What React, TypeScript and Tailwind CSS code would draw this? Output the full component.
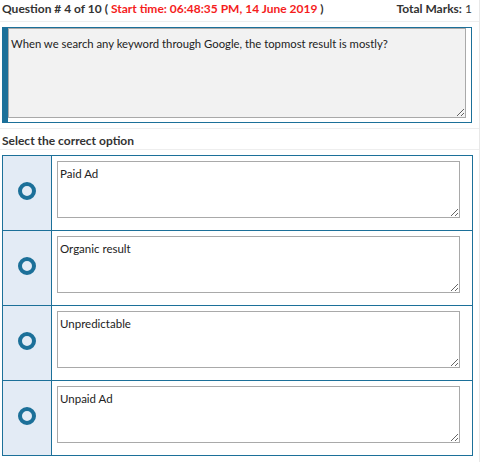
import React from "react";

const options = ["Paid Ad", "Organic result", "Unpredictable", "Unpaid Ad"];

export default function App() {
  return (
    <div className="w-[480px] h-[462px] bg-white border-r border-[#e8e8e8] overflow-hidden font-['Lato',sans-serif] text-[#333]">
      <div className="flex justify-between items-center h-[22px] px-[2px] pr-[7px] pb-[3px] border-b border-[#eeeeee] text-[12px]">
        <div className="font-bold">
          Question # 4 of 10 ({" "}
          <span className="text-[#f51d1d]">Start time: 06:48:35 PM, 14 June 2019</span> )
        </div>
        <div>
          <span className="font-bold">Total Marks:</span> 1
        </div>
      </div>

      <div className="mt-[5px] ml-[2px] w-[470px] border border-l-[6px] border-[#1c7099] pt-0 pb-[4px] pr-[5px]">
        <textarea
          readOnly
          defaultValue="When we search any keyword through Google, the topmost result is mostly?"
          className="block w-[458px] h-[90px] bg-[#f2f2f2] border border-[#a9a9a9] px-[2px] pt-[6px] text-[11.3px] leading-[18px] text-[#222] font-['Lato',sans-serif] outline-none resize-y"
        />
      </div>

      <div className="mt-[5px] border-t border-b border-[#eeeeee] h-[22px] flex items-center pt-[4px] px-[2px] text-[12px] font-bold">
        Select the correct option
      </div>

      <div className="mt-[5px] ml-[2px] w-[471px] border-l border-r border-b border-[#1c7099]">
        {options.map((o) => (
          <div key={o} className="flex h-[75px] border-t border-[#1c7099]">
            <div className="w-[49px] bg-[#e3ebf5] border-r border-[#1c7099] flex items-center justify-center pb-[5px]">
              <div className="w-[18px] h-[18px] rounded-full border-[4px] border-[#1c7099]" />
            </div>
            <div className="flex-1 pl-[5px] pt-[5px]">
              <textarea
                readOnly
                defaultValue={o}
                className="block w-[403px] h-[57px] bg-white border border-[#a9a9a9] px-[2px] pt-[3px] text-[11.5px] leading-[18px] text-[#222] font-['Lato',sans-serif] outline-none resize-y"
              />
            </div>
          </div>
        ))}
      </div>
    </div>
  );
}
